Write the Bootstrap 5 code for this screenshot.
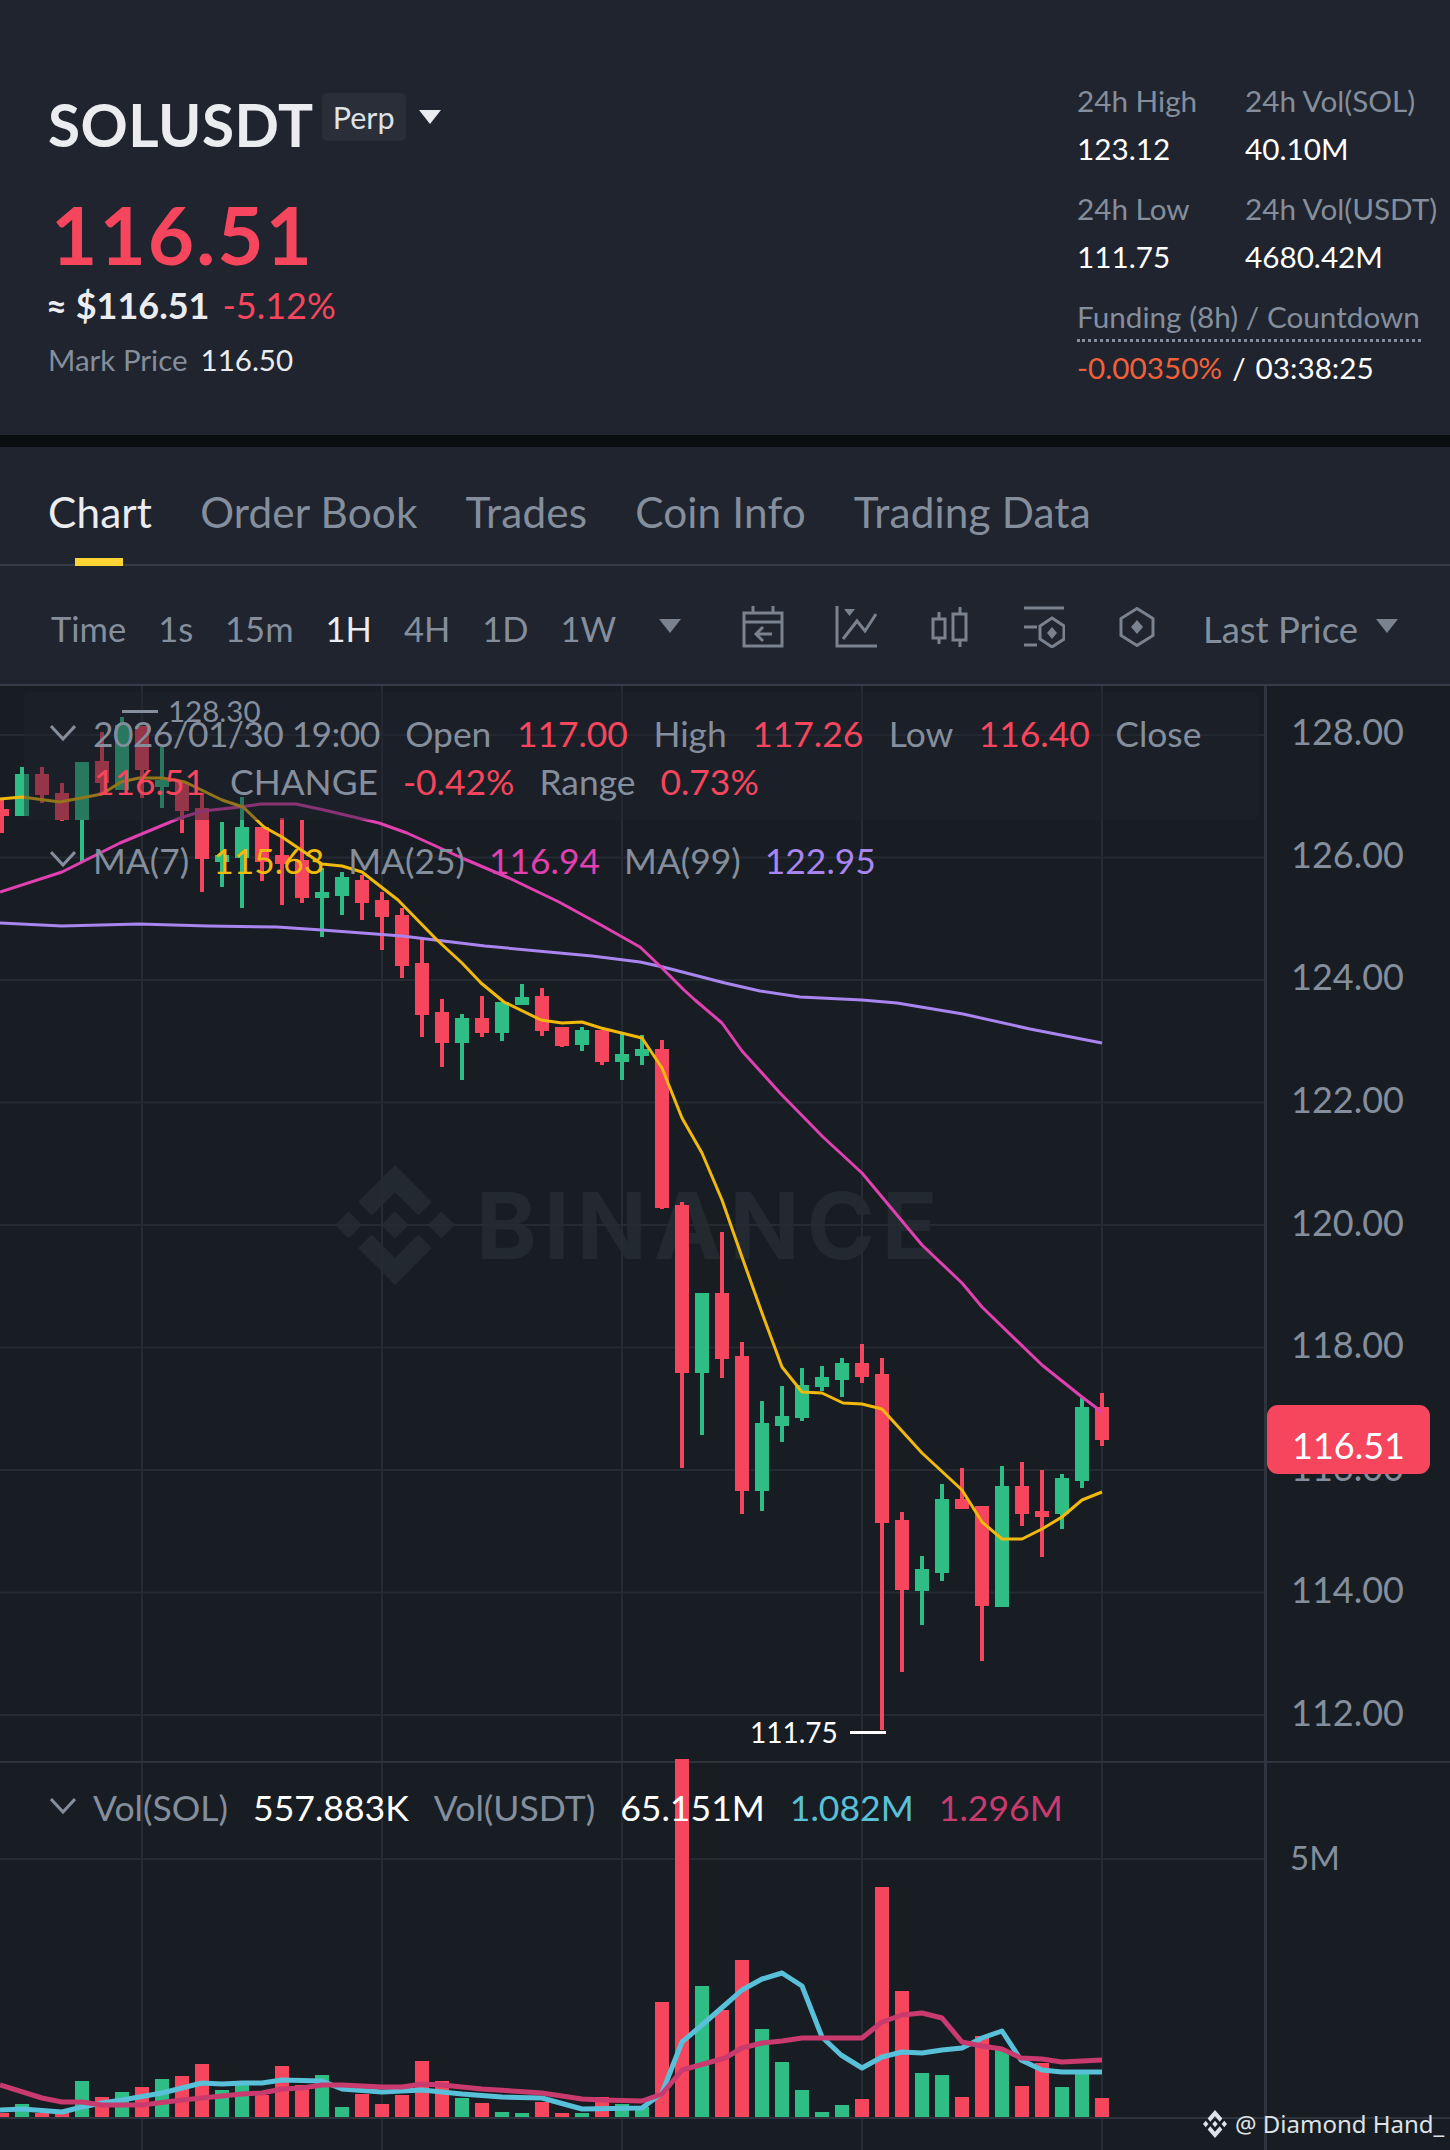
<!DOCTYPE html>
<html lang="en">
<head>
  <meta charset="UTF-8">
  <title>SOLUSDT Perp</title>
  <link href="https://cdn.jsdelivr.net/npm/bootstrap@5.3.2/dist/css/bootstrap.min.css" rel="stylesheet">
  <style>
    body{background:#181d24;font-family:"Lato","Open Sans",sans-serif;color:#eaecef;margin:0;overflow:hidden}
    .shell{width:1450px;height:2150px;overflow:hidden}
    .quote-head{height:435px;background:#1f242e;padding:0 0 0 48px}
    .sym-row{padding-top:95px}
    .sym-name{font-size:58.500px;font-weight:700;line-height:1;color:#eaecef;letter-spacing:.5px}
    .sym-tag{background:#292e38;border-radius:6px;font-size:30.500px;line-height:48px;height:48px;padding:0 11px;margin:-14px 0 0 8px;color:#dfe2e6}
    .tri{width:0;height:0;border-left:11px solid transparent;border-right:11px solid transparent;border-top:14px solid #eaecef;margin:-14px 0 0 13px}
    .last-px{font-size:80px;font-weight:700;line-height:1;color:#f6465d;margin:40px 0 0 3px;letter-spacing:2px}
    .fiat-row{font-size:36px;line-height:1;margin:13px 0 0 -2px;gap:13px}
    .fiat-row b{font-weight:700;color:#eaecef}
    .neg{color:#f6465d}
    .mark-row{font-size:29.500px;line-height:1;margin-top:22px;gap:13px}
    .dim{color:#848e9c}
    .stat-side{width:373px;padding-top:84px;font-size:29.700px;line-height:34px}
    .stat-grid{display:grid;grid-template-columns:168px auto;row-gap:26px;color:#fff;white-space:nowrap}
    .stat-grid .lbl{color:#848e9c;margin-bottom:14px}
    .fund-lbl{color:#848e9c;width:344px;border-bottom:3px dotted #848e9c;margin-top:26px;padding-bottom:5px;white-space:nowrap}
    .fund-val{margin-top:9px;gap:10px;color:#fff;white-space:nowrap}
    .fund-neg{color:#f2603a}
    .gap-band{height:12px;background:#0b0e11}
    .tab-strip{height:119px;background:#1f242e;border-bottom:2px solid #363c48;padding:0 48px;gap:48px;align-items:flex-start}
    .tab-strip .nav-link{padding:39px 0 0;font-size:42.300px;line-height:52px;letter-spacing:.15px;color:#848e9c;position:relative;height:117px;--bs-nav-link-hover-color:#848e9c}
    .tab-strip .nav-link.active{color:#eaecef}
    .tab-strip .nav-link.active::after{content:"";position:absolute;left:27px;width:48px;bottom:-2px;height:8px;background:#fcd535}
    .tool-strip{height:120px;background:#1f242e;border-bottom:2px solid #363c48;font-size:34.500px;color:#848e9c;padding:8px 52px 0 51px;position:relative}
    .tool-strip .on{color:#eaecef}
    .tf-list{gap:32px}
    .tri-sm{width:0;height:0;border-left:11px solid transparent;border-right:11px solid transparent;border-top:14px solid #7a8290;margin-top:-6px}
    .tf-tri{margin-left:11px}
    .tool-icons svg{margin-top:-5px;margin-left:54px}
    .tool-icons svg.first-ic{margin-left:0}
    .tool-icons svg.tight-ic{margin-left:51px}
    .last-sel{margin-left:48px;font-size:36.500px}
    .last-tri{margin-left:18px}
    .chart-area{height:1464px;position:relative;background:#181d24;overflow:hidden}
    .chart-svg{position:absolute;left:0;top:0;width:1450px;height:1464px}
    .wm-logo{position:absolute;left:335px;top:479px}
    .wm-text{position:absolute;left:476px;top:494px;font-family:Inter,sans-serif;font-weight:700;font-size:92px;line-height:1;letter-spacing:7px;color:#232930}
    .info-box{position:absolute;left:24px;top:6px;width:1234px;height:128px;background:rgba(31,36,46,.45);border-radius:6px}
    .leg-row{position:absolute;white-space:nowrap;font-size:35.400px;line-height:40px;color:#848e9c;gap:24px}
    .leg-row.ohlc-row{gap:25.500px}
    .leg-row.chg-row{gap:25px}
    .leg-row.vol-row{font-size:35.600px;gap:25px}
    .leg-row .stamp-date{letter-spacing:-.6px}
    .leg-chev{position:absolute;left:50px;width:26px;height:16px}
    .ma-y{color:#f0b90b}.ma-p{color:#e040b0}.ma-v{color:#a985f0}
    .vol-c{color:#58c0d8}.vol-m{color:#c93a6e}
    .price-lbl{position:absolute;left:1291px;font-size:36px;line-height:40px;color:#848e9c}
    .price-lbl.vol-axis{left:1290px;font-size:33px}
    .price-tag{position:absolute;left:1267px;top:719px;width:163px;height:69px;border-radius:11px;background:#f6465d;color:#fff;font-size:36px;text-align:center;line-height:40px;padding-top:20px}
    .hi-lo{position:absolute;font-size:28px;line-height:34px;white-space:nowrap;gap:12px}
    .hi-lo.hi-mark{font-size:29.500px;gap:10px}
    .tick-line{display:inline-block;width:36px;height:3px;background:currentColor}
    .mk-stamp{position:absolute;left:1203px;top:1422px;font-family:"Noto Sans",sans-serif;font-size:24px;line-height:32px;color:#dfe2e6;gap:8px;white-space:nowrap}
  </style>
</head>
<body>
<div class="shell">

  <!-- symbol + stats -->
  <div class="quote-head d-flex justify-content-between">
    <div>
      <div class="sym-row d-flex align-items-center">
        <span class="sym-name">SOLUSDT</span>
        <span class="sym-tag">Perp</span>
        <span class="tri"></span>
      </div>
      <div class="last-px">116.51</div>
      <div class="fiat-row d-flex"><b>≈ $116.51</b><span class="neg">-5.12%</span></div>
      <div class="mark-row d-flex"><span class="dim">Mark Price</span><span>116.50</span></div>
    </div>
    <div class="stat-side">
      <div class="stat-grid">
        <div><div class="lbl">24h High</div><div>123.12</div></div>
        <div><div class="lbl">24h Vol(SOL)</div><div>40.10M</div></div>
        <div><div class="lbl">24h Low</div><div>111.75</div></div>
        <div><div class="lbl">24h Vol(USDT)</div><div>4680.42M</div></div>
      </div>
      <div class="fund-lbl">Funding (8h) / Countdown</div>
      <div class="fund-val d-flex"><span class="fund-neg">-0.00350%</span><span>/</span><span>03:38:25</span></div>
    </div>
  </div>
  <div class="gap-band"></div>

  <!-- tabs -->
  <ul class="nav tab-strip">
    <li class="nav-item"><a class="nav-link active" href="#">Chart</a></li>
    <li class="nav-item"><a class="nav-link" href="#">Order Book</a></li>
    <li class="nav-item"><a class="nav-link" href="#">Trades</a></li>
    <li class="nav-item"><a class="nav-link" href="#">Coin Info</a></li>
    <li class="nav-item"><a class="nav-link" href="#">Trading Data</a></li>
  </ul>

  <!-- interval toolbar -->
  <div class="tool-strip d-flex align-items-center justify-content-between">
    <div class="tf-list d-flex align-items-center">
      <span>Time</span><span>1s</span><span>15m</span><span class="on">1H</span><span>4H</span><span>1D</span><span>1W</span>
      <span class="tri-sm tf-tri"></span>
    </div>
    <div class="d-flex align-items-center tool-icons">
      <svg class="first-ic" width="42" height="42" viewBox="0 0 42 42" fill="none" stroke="#7a8290" stroke-width="3"><path d="M2 7h38v33H2zM2 16h38M11 0v7M31 0v7M30 28H14M21 21l-7 7 7 7"/></svg>
      <svg class="tight-ic" width="42" height="42" viewBox="0 0 42 42" fill="none" stroke="#7a8290" stroke-width="3"><path d="M2 0v40h40M8 33l14-18 8 10 11-17"/><path d="M9 3h11l-5.500 7z" fill="#7a8290" stroke="none"/></svg>
      <svg width="38" height="40" viewBox="0 0 38 40" fill="none" stroke="#7a8290" stroke-width="3"><path d="M8 5v7M8 31v6M2 12h12v19H2zM29 0v7M29 33v7M22 7h13v26H22z"/></svg>
      <svg width="42" height="42" viewBox="0 0 42 42" fill="none" stroke="#7a8290" stroke-width="3"><path d="M1 2h40M1 21h13M1 39h13"/><path d="M29 12l12 8v13l-12 8-12-8V20z"/><path d="M29 21l5 6-5 6-5-6z" fill="#7a8290" stroke="none"/></svg>
      <svg width="36" height="40" viewBox="0 0 36 40" fill="none" stroke="#7a8290" stroke-width="3"><path d="M18 1.500l16 10v17l-16 10-16-10v-17z"/><path d="M18 13l6 7-6 7-6-7z" fill="#7a8290" stroke="none"/></svg>
      <span class="last-sel">Last Price</span>
      <span class="tri-sm last-tri"></span>
    </div>
  </div>

  <!-- chart canvas -->
  <div class="chart-area">
    <svg class="wm-logo" width="120" height="120" viewBox="0 0 126.610 126.610" fill="#232930"><path d="M38.730 53.200l24.590-24.580 24.600 24.600 14.300-14.310L63.320 0 24.420 38.900z"/><path d="M0 63.310l14.300-14.310 14.310 14.310-14.310 14.300z"/><path d="M38.730 73.410L63.320 98l24.600-24.600 14.310 14.290-38.900 38.910-38.910-38.880-.02-.02z"/><path d="M98 63.310l14.300-14.310 14.310 14.300-14.310 14.320z"/><path d="M77.830 63.300L63.320 48.780 48.810 63.280l14.510 14.500z"/></svg>
    <div class="wm-text">BINANCE</div>

    <svg class="chart-svg" id="chart" viewBox="0 686 1450 1464"></svg>

    <div class="info-box"></div>

    <div class="hi-lo hi-mark dim d-flex align-items-center" style="left:122px;top:8px"><span class="tick-line"></span><span>128.30</span></div>
    <svg class="leg-chev" style="top:39px" viewBox="0 0 26 16" fill="none" stroke="#848e9c" stroke-width="3"><path d="M1 1l12 13L25 1"/></svg>
    <div class="leg-row ohlc-row d-flex" style="left:93px;top:28px">
      <span class="stamp-date">2026/01/30 19:00</span><span>Open</span><span class="neg">117.00</span><span>High</span><span class="neg">117.26</span><span>Low</span><span class="neg">116.40</span><span>Close</span>
    </div>
    <div class="leg-row chg-row d-flex" style="left:94px;top:76px">
      <span class="neg">116.51</span><span>CHANGE</span><span class="neg">-0.42%</span><span>Range</span><span class="neg">0.73%</span>
    </div>
    <svg class="leg-chev" style="top:165px" viewBox="0 0 26 16" fill="none" stroke="#848e9c" stroke-width="3"><path d="M1 1l12 13L25 1"/></svg>
    <div class="leg-row d-flex" style="left:93px;top:155px">
      <span>MA(7)</span><span class="ma-y">115.63</span><span>MA(25)</span><span class="ma-p">116.94</span><span>MA(99)</span><span class="ma-v">122.95</span>
    </div>

    <div class="price-lbl" style="top:25px">128.00</div>
    <div class="price-lbl" style="top:148px">126.00</div>
    <div class="price-lbl" style="top:270px">124.00</div>
    <div class="price-lbl" style="top:393px">122.00</div>
    <div class="price-lbl" style="top:516px">120.00</div>
    <div class="price-lbl" style="top:638px">118.00</div>
    <div class="price-lbl" style="top:761px">116.00</div>
    <div class="price-lbl" style="top:883px">114.00</div>
    <div class="price-lbl" style="top:1006px">112.00</div>
    <div class="price-tag">116.51</div>

    <div class="hi-lo text-white d-flex align-items-center" style="left:750px;top:1029px"><span>111.75</span><span class="tick-line"></span></div>

    <svg class="leg-chev" style="top:1112px" viewBox="0 0 26 16" fill="none" stroke="#848e9c" stroke-width="3"><path d="M1 1l12 13L25 1"/></svg>
    <div class="leg-row vol-row d-flex" style="left:93px;top:1102px">
      <span>Vol(SOL)</span><span class="text-white">557.883K</span><span>Vol(USDT)</span><span class="text-white">65.151M</span><span class="vol-c">1.082M</span><span class="vol-m">1.296M</span>
    </div>
    <div class="price-lbl vol-axis" style="top:1151px">5M</div>

    <div class="mk-stamp d-flex align-items-center">
      <svg width="24" height="28" viewBox="0 0 126.610 126.610" fill="#dfe2e6" preserveAspectRatio="none"><path d="M38.730 53.200l24.590-24.580 24.600 24.600 14.300-14.310L63.320 0 24.420 38.900z"/><path d="M0 63.310l14.300-14.310 14.310 14.310-14.310 14.300z"/><path d="M38.730 73.410L63.320 98l24.600-24.600 14.310 14.290-38.900 38.910-38.910-38.880-.02-.02z"/><path d="M98 63.310l14.300-14.310 14.310 14.300-14.310 14.320z"/><path d="M77.830 63.300L63.320 48.780 48.810 63.280l14.510 14.500z"/></svg>
      <span>@ Diamond Hand_</span>
    </div>
  </div>
</div>

<script>
// wickTop, bodyTop, bodyBottom, wickBottom, side (page px)
const candles = [
[800,809,816,833,'r'],[767,774,816,816,'g'],[767,774,795,803,'r'],[783,793,820,821,'r'],[762,762,820,862,'g'],
[732,761,783,795,'r'],[717,725,790,790,'g'],[726,726,770,798,'r'],[747,780,787,808,'g'],[782,782,811,833,'r'],
[793,808,859,892,'r'],[822,855,862,887,'g'],[797,827,858,908,'g'],[827,827,862,881,'r'],[818,855,864,905,'r'],
[820,860,898,903,'r'],[868,892,898,937,'g'],[872,877,896,915,'g'],[875,880,903,920,'r'],[892,900,917,950,'r'],
[908,915,966,978,'r'],[938,963,1015,1037,'r'],[999,1012,1043,1067,'r'],[1014,1018,1043,1080,'g'],[996,1018,1033,1037,'r'],
[1002,1002,1033,1041,'g'],[984,997,1005,1005,'g'],[988,996,1031,1036,'r'],[1027,1027,1046,1047,'r'],[1027,1030,1045,1051,'g'],
[1030,1030,1062,1065,'r'],[1033,1054,1062,1080,'g'],[1035,1049,1056,1065,'g'],[1040,1049,1208,1209,'r'],[1202,1205,1373,1468,'r'],
[1293,1293,1373,1435,'g'],[1232,1293,1359,1378,'r'],[1342,1356,1491,1514,'r'],[1401,1423,1491,1511,'g'],[1386,1416,1426,1442,'g'],
[1368,1385,1418,1421,'g'],[1366,1377,1387,1391,'g'],[1358,1363,1380,1397,'g'],[1344,1363,1377,1383,'r'],[1358,1374,1523,1730,'r'],
[1512,1520,1590,1672,'r'],[1556,1569,1591,1625,'g'],[1484,1499,1573,1581,'g'],[1468,1499,1509,1509,'r'],[1506,1506,1606,1661,'r'],
[1466,1486,1607,1607,'g'],[1462,1486,1514,1526,'r'],[1470,1511,1517,1557,'r'],[1474,1478,1514,1529,'g'],[1398,1407,1481,1488,'g'],
[1393,1407,1440,1446,'r']
];
const volTop = [2113,2104,2113,2113,2081,2097,2092,2087,2079,2076,2064,2090,2085,2095,2066,2085,2075,2107,2094,2104,2095,2061,2081,2098,2103,2112,2113,2102,2113,2113,2097,2104,2107,2002,1759,1986,2010,1960,2029,2062,2090,2112,2105,2099,1887,1991,2073,2075,2097,2036,2050,2086,2063,2087,2073,2098];

const ma7 = "0,799 22,797 60,802 102,794 121,782 139,778 162,778 185,782 222,800 243,807 264,827 282,837 322,864 342,866 362,872 398,900 437,940 462,963 481,983 504,1002 541,1020 562,1023 582,1022 601,1028 642,1038 662,1068 682,1118 702,1153 722,1200 742,1257 762,1313 782,1367 802,1392 822,1393 843,1403 862,1404 882,1409 922,1453 962,1490 982,1522 1002,1539 1022,1539 1042,1529 1062,1517 1082,1500 1102,1492";
const ma25 = "0,892 62,872 120,843 180,818 203,811 240,807 261,804 296,804 324,810 379,823 407,833 462,858 509,878 559,902 601,925 640,947 661,967 684,990 695,1000 722,1023 742,1051 780,1093 823,1137 862,1173 887,1203 922,1245 962,1283 982,1307 1042,1365 1082,1397 1102,1412";
const ma99 = "0,923 62,926 139,924 208,926 277,927 322,930 402,936 485,946 592,956 640,962 663,967 725,983 760,991 800,997 862,1000 897,1003 963,1014 1030,1029 1102,1043";
const volA = "0,2110 22,2109 62,2112 82,2107 102,2103 122,2100 162,2093 202,2083 222,2084 242,2083 262,2083 282,2080 322,2081 342,2089 382,2092 422,2090 462,2094 502,2097 542,2098 582,2109 642,2108 662,2093 682,2042 702,2025 725,2005 742,1990 762,1979 782,1973 802,1986 822,2037 841,2055 862,2068 882,2057 902,2052 922,2053 942,2050 962,2048 982,2038 1002,2031 1021,2060 1042,2070 1062,2072 1102,2072";
const volB = "0,2085 42,2098 62,2102 82,2102 102,2105 142,2105 182,2100 202,2098 242,2094 262,2093 282,2089 302,2088 322,2085 342,2085 382,2087 402,2087 422,2084 442,2085 462,2087 482,2089 542,2093 582,2099 602,2100 642,2101 662,2094 682,2070 725,2058 742,2048 762,2043 782,2041 802,2038 862,2038 882,2022 902,2015 922,2013 942,2018 962,2042 982,2046 1002,2049 1021,2058 1042,2059 1062,2062 1102,2060";

const RED = '#f6465d', GREEN = '#2ebd85';
let s = '';

// grid
[142,382,622,862,1102].forEach(x => s += `<rect x="${x-1}" y="686" width="2" height="1464" fill="#252a33"/>`);
[735,857.500,980,1102.500,1225,1347.500,1470,1592.500,1715,1859].forEach(y => s += `<rect x="0" y="${y-1}" width="1264" height="2" fill="#252a33"/>`);
s += '<rect x="1264" y="686" width="3" height="1464" fill="#2e343e"/>';
s += '<rect x="0" y="1761" width="1450" height="2" fill="#2e343e"/>';
s += '<rect x="0" y="2117" width="1450" height="2" fill="#2e343e"/>';

// volume bars, lines go on top
volTop.forEach((t, i) => {
  const x = 2 + 20 * i;
  s += `<rect x="${x-7}" y="${t}" width="14" height="${2117-t}" fill="${candles[i][4]=='g'?GREEN:RED}"/>`;
});
s += `<polyline points="${volA}" fill="none" stroke="#58c0d8" stroke-width="5" stroke-linejoin="round"/>`;
s += `<polyline points="${volB}" fill="none" stroke="#c93a6e" stroke-width="5" stroke-linejoin="round"/>`;

// candles
candles.forEach((c, i) => {
  const x = 2 + 20 * i, col = c[4]=='g' ? GREEN : RED;
  s += `<rect x="${x-2}" y="${c[0]}" width="4" height="${c[3]-c[0]}" fill="${col}"/>`;
  s += `<rect x="${x-7}" y="${c[1]}" width="14" height="${c[2]-c[1]}" fill="${col}"/>`;
});
[[ma99,'#a985f0'],[ma25,'#e040b0'],[ma7,'#f0b90b']].forEach(([p,col]) => {
  s += `<polyline points="${p}" fill="none" stroke="${col}" stroke-width="3" stroke-linejoin="round"/>`;
});
document.getElementById('chart').innerHTML = s;
</script>
<script src="https://cdn.jsdelivr.net/npm/bootstrap@5.3.2/dist/js/bootstrap.bundle.min.js"></script>
</body>
</html>
